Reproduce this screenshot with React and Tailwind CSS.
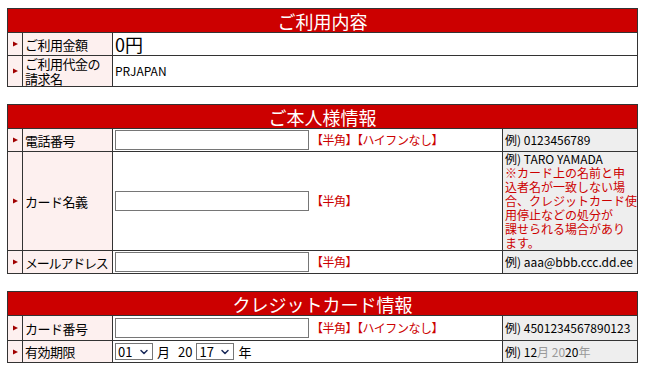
import { ChevronDown } from "lucide-react";

const font = { fontFamily: '"Noto Sans CJK JP", "Liberation Sans", sans-serif' };

const Arrow = () => (
  <td className="border border-[#333] bg-[#fdf0ef] align-middle">
    <svg width="15" height="8" viewBox="0 0 15 8" className="block">
      <path d="M5 1.5 L10 4 L5 6.5 Z" fill="#a00000" />
    </svg>
  </td>
);

const Label = ({ children }) => (
  <td className="whitespace-nowrap border border-[#333] bg-[#fdf0ef] pl-[2px] text-[13px] leading-[15px] tracking-[-0.5px] text-black align-middle">
    {children}
  </td>
);

const Header = ({ title, span }) => (
  <tr>
    <th
      colSpan={span}
      className="h-[24px] border border-[#333] bg-[#cc0000] p-0 text-center text-[18px] font-normal leading-[22px] text-white"
    >
      {title}
    </th>
  </tr>
);

const TextBox = () => (
  <div className="h-[20px] w-[194px] border border-[#767676] bg-white" />
);

const Note = ({ children }) => (
  <span className="text-[12px] text-[#cc0000] tracking-[-0.5px]">{children}</span>
);

const Example = ({ children }) => (
  <td className="border border-[#333] bg-[#eeeeee] pl-[2px] text-[12px] leading-[14px] text-black align-middle">
    {children}
  </td>
);

const Select = ({ value }) => (
  <div className="flex h-[17px] w-[38px] items-center border border-[#767676] bg-white pl-[2px] text-[13px] leading-[14px]">
    <span className="flex-1">{value}</span>
    <ChevronDown className="mr-[2px] h-[12px] w-[12px] text-[#1a2a5a]" strokeWidth={3} />
  </div>
);

const Cols4 = () => (
  <colgroup>
    <col className="w-[15px]" />
    <col className="w-[90px]" />
    <col className="w-[390px]" />
    <col className="w-[135px]" />
  </colgroup>
);

export default function App() {
  return (
    <div className="w-[646px] h-[372px] bg-white pt-[8px] pl-[7px]" style={font}>
      <table className="w-[631px] table-fixed border-collapse border border-[#333]">
        <colgroup>
          <col className="w-[15px]" />
          <col className="w-[90px]" />
          <col className="w-[525px]" />
        </colgroup>
        <tbody>
          <Header title="ご利用内容" span={3} />
          <tr className="h-[23px]">
            <Arrow />
            <Label>ご利用金額</Label>
            <td className="border border-[#333] pl-[2px] text-[18px] leading-[20px] align-middle">0円</td>
          </tr>
          <tr className="h-[31px]">
            <Arrow />
            <Label>ご利用代金の<br />請求名</Label>
            <td className="border border-[#333] pl-[2px] text-[12px] align-middle">PRJAPAN</td>
          </tr>
        </tbody>
      </table>

      <table className="mt-[17px] w-[631px] table-fixed border-collapse border border-[#333]">
        <Cols4 />
        <tbody>
          <Header title="ご本人様情報" span={4} />
          <tr className="h-[23px]">
            <Arrow />
            <Label>電話番号</Label>
            <td className="border border-[#333] pl-[2px] align-middle">
              <div className="flex items-center gap-[2px]">
                <TextBox />
                <Note>【半角】【ハイフンなし】</Note>
              </div>
            </td>
            <Example>例) 0123456789</Example>
          </tr>
          <tr className="h-[99px]">
            <Arrow />
            <Label>カード名義</Label>
            <td className="border border-[#333] pl-[2px] align-middle">
              <div className="flex items-center gap-[2px]">
                <TextBox />
                <Note>【半角】</Note>
              </div>
            </td>
            <Example>
              例) TARO YAMADA
              <br />
              <span className="text-[#cc0000]">
                ※カード上の名前と申<br />込者名が一致しない場<br />合、クレジットカード使<br />用停止などの処分が<br />課せられる場合があり<br />ます。
              </span>
            </Example>
          </tr>
          <tr className="h-[23px]">
            <Arrow />
            <Label><span className="tracking-[-1.2px]">メールアドレス</span></Label>
            <td className="border border-[#333] pl-[2px] align-middle">
              <div className="flex items-center gap-[2px]">
                <TextBox />
                <Note>【半角】</Note>
              </div>
            </td>
            <Example>例) aaa@bbb.ccc.dd.ee</Example>
          </tr>
        </tbody>
      </table>

      <table className="mt-[17px] w-[631px] table-fixed border-collapse border border-[#333]">
        <Cols4 />
        <tbody>
          <Header title="クレジットカード情報" span={4} />
          <tr className="h-[25px]">
            <Arrow />
            <Label>カード番号</Label>
            <td className="border border-[#333] pl-[2px] align-middle">
              <div className="flex items-center gap-[2px]">
                <TextBox />
                <Note>【半角】【ハイフンなし】</Note>
              </div>
            </td>
            <Example>例) 4501234567890123</Example>
          </tr>
          <tr className="h-[22px]">
            <Arrow />
            <Label>有効期限</Label>
            <td className="border border-[#333] pl-[2px] align-middle">
              <div className="flex items-center text-[13px] leading-[14px]">
                <Select value="01" />
                <span className="ml-[4px]">月</span>
                <span className="ml-[8px]">20</span>
                <span className="ml-[4px]"><Select value="17" /></span>
                <span className="ml-[4px]">年</span>
              </div>
            </td>
            <Example>
              例) 12<span className="text-[#999]">月 20</span>20<span className="text-[#999]">年</span>
            </Example>
          </tr>
        </tbody>
      </table>
    </div>
  );
}
